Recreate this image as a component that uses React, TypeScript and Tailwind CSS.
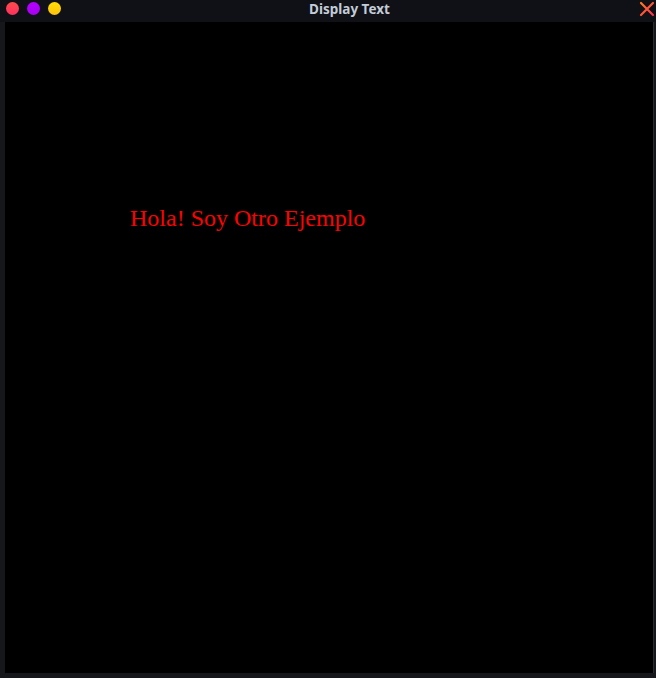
import React from "react";

export default function App() {
  return (
    <div className="w-[656px] h-[678px] bg-[#16171b] flex flex-col overflow-hidden">
      <div className="h-[22px] bg-[#0f1116] flex items-start relative shrink-0">
        <div className="flex items-center gap-[8px] pl-[6px] pt-[2px]">
          <div className="w-[13px] h-[13px] rounded-full bg-gradient-to-b from-[#ff4a4a] to-[#ff3060]" />
          <div className="w-[13px] h-[13px] rounded-full bg-gradient-to-b from-[#b400ff] to-[#a800f0]" />
          <div className="w-[13px] h-[13px] rounded-full bg-gradient-to-b from-[#ffe000] to-[#ffc010]" />
        </div>
        <div
          className="flex-1 text-center text-[13.5px] leading-[18px] font-bold text-[#c3ccd8] pr-[1px]"
          style={{ fontFamily: '"Noto Sans", "Open Sans", sans-serif' }}
        >
          Display Text
        </div>
        <svg width="16" height="16" viewBox="0 0 16 16" className="mr-[1px] mt-[1px]">
          <defs>
            <linearGradient id="xg" x1="0" y1="0" x2="1" y2="1">
              <stop offset="0" stopColor="#ff7a20" />
              <stop offset="1" stopColor="#ff3050" />
            </linearGradient>
          </defs>
          <path d="M2 2 L14 14 M14 2 L2 14" stroke="url(#xg)" strokeWidth="2.2" strokeLinecap="round" />
        </svg>
      </div>
      <div className="flex-1 flex pl-[5px] pr-[2px] pb-[5px]">
        <div className="flex-1 bg-black border-r border-[#2a2c30] pl-[125px] pt-[183px]">
          <div
            className="text-[24px] leading-[27px] text-[#ff0000]"
            style={{ fontFamily: '"Liberation Serif", serif' }}
          >
            Hola! Soy Otro Ejemplo
          </div>
        </div>
      </div>
    </div>
  );
}
